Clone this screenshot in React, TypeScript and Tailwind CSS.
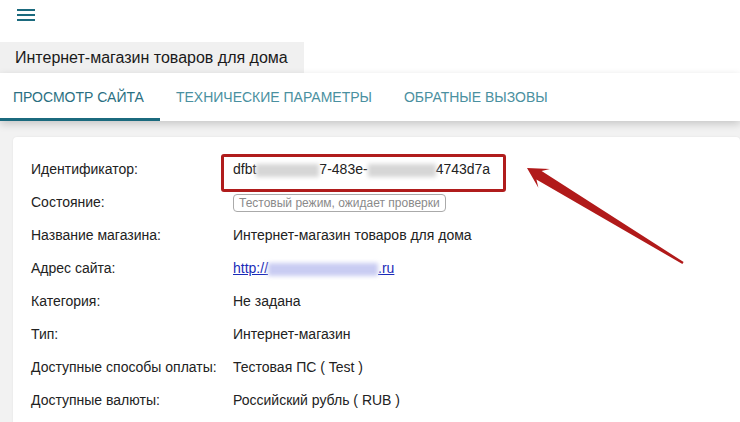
function Blur({ w, color = '#d6d6d6' }: { w: number; color?: string }) {
  return (
    <span
      className="inline-block h-[13px] align-middle blur-[2px]"
      style={{ width: w, backgroundColor: color }}
    />
  )
}

function Row({ label, children }: { label: string; children: React.ReactNode }) {
  return (
    <div className="grid grid-cols-[202px_1fr] h-[33px] items-center">
      <span>{label}</span>
      <div className="relative">{children}</div>
    </div>
  )
}

function Arrow() {
  return (
    <svg className="absolute left-0 top-0 pointer-events-none" width="740" height="422">
      <polygon
        points="527,168 549.8,169 541.6,171 683.6,262 682.4,264 536.4,179.6 538.4,187.8"
        fill="#b11a1a"
      />
    </svg>
  )
}

export default function App() {
  return (
    <div className="relative w-[740px] h-[422px] overflow-hidden bg-white font-['Liberation_Sans',Arial,sans-serif] text-[#222]">
      {/* Hamburger */}
      <div className="h-[42px] pl-[17px] pt-[9px]">
        <div className="flex flex-col gap-[3px] w-[18px]">
          <span className="h-[2px] bg-[#1b6a7e]" />
          <span className="h-[2px] bg-[#1b6a7e]" />
          <span className="h-[2px] bg-[#1b6a7e]" />
        </div>
      </div>

      {/* Title */}
      <div className="w-[304px] h-[31px] bg-[#f0f0f0] pl-[15px] text-[16px] leading-[31px] text-[#1a1a1a]">
        Интернет-магазин товаров для дома
      </div>

      {/* Tabs */}
      <div className="relative z-10 flex h-[48px] bg-white shadow-[0_3px_8px_rgba(0,0,0,0.18)] text-[14px] uppercase">
        <div className="relative flex items-center pl-[13px] pr-[16px] text-[#2a6f82]">
          Просмотр сайта
          <span className="absolute left-0 right-0 bottom-0 h-[3px] bg-[#1b6a7e]" />
        </div>
        <div className="flex items-center px-[16px] text-[#4a90a0]">Технические параметры</div>
        <div className="flex items-center px-[16px] text-[#4a90a0]">Обратные вызовы</div>
      </div>

      {/* Content */}
      <div className="bg-[#f2f2f2] pt-[16px] pl-[13px] h-full">
        <div className="bg-white rounded-[4px] pt-[16px] pl-[18px] text-[14px] text-[#222] shadow-[0_0_2px_rgba(0,0,0,0.08)] h-full">
          <Row label="Идентификатор:">
            <span className="absolute left-[-12px] top-[-5px] w-[285px] h-[38px] border-[3px] border-[#b01c1c] rounded-[3px]" />
            <span className="whitespace-nowrap">
              dfbt<Blur w={63} />7-483e-<Blur w={68} />4743d7a
            </span>
          </Row>
          <Row label="Состояние:">
            <span className="inline-block h-[18px] px-[5px] border border-[#aaa] rounded-[4px] text-[12px] leading-[16px] text-[#8a8a8a]">
              Тестовый режим, ожидает проверки
            </span>
          </Row>
          <Row label="Название магазина:">Интернет-магазин товаров для дома</Row>
          <Row label="Адрес сайта:">
            <span className="text-[#1a2bb8] underline whitespace-nowrap">
              http://<Blur w={110} color="#c9ccf2" />.ru
            </span>
          </Row>
          <Row label="Категория:">Не задана</Row>
          <Row label="Тип:">Интернет-магазин</Row>
          <Row label="Доступные способы оплаты:">Тестовая ПС ( Test )</Row>
          <Row label="Доступные валюты:">Российский рубль ( RUB )</Row>
        </div>
      </div>

      <Arrow />
    </div>
  )
}
